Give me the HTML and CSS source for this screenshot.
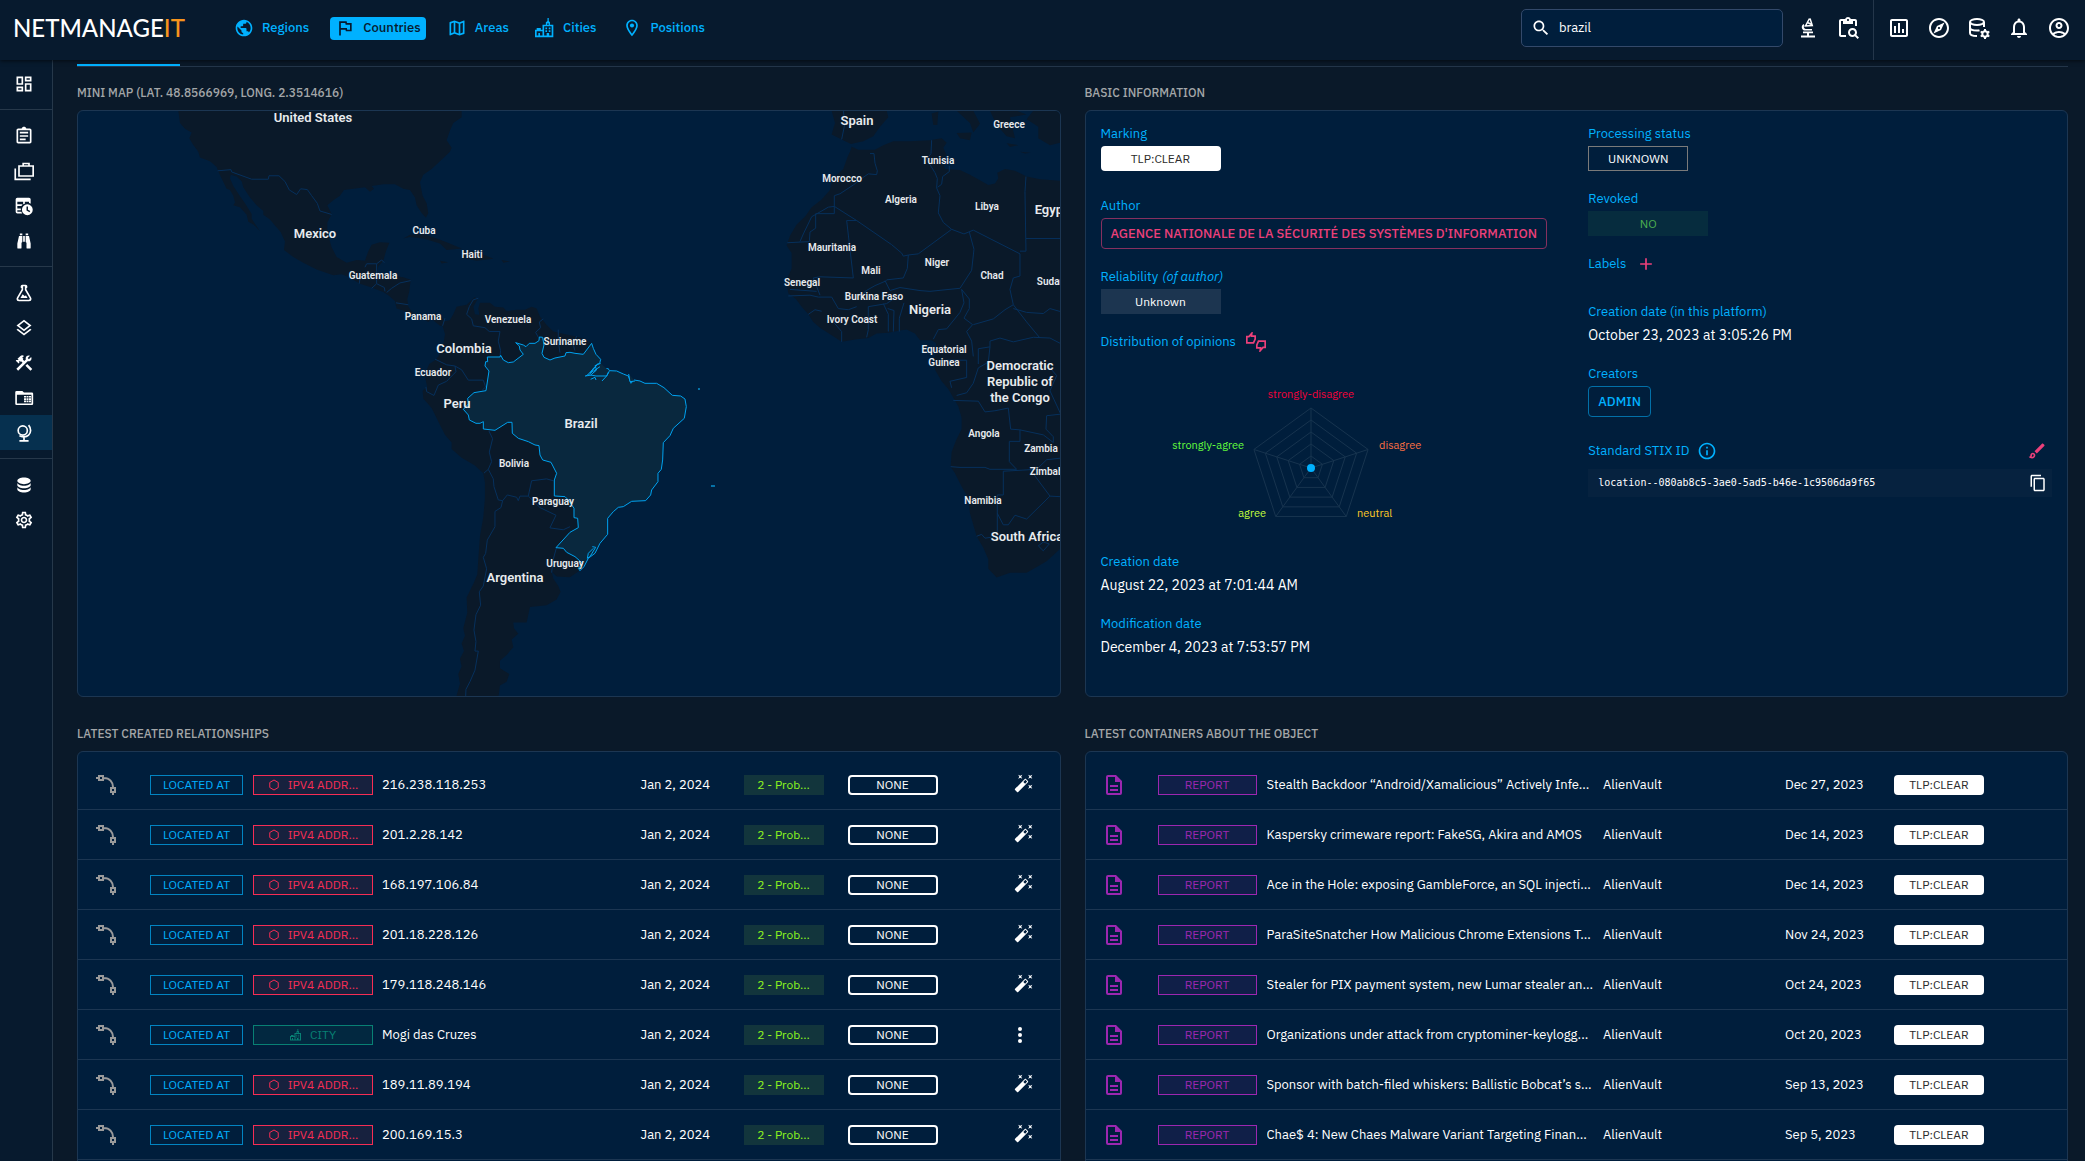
FILE: index.html
```html
<!DOCTYPE html>
<html lang="en">

<head>
    <meta charset="utf-8">
    <title>Brazil - Countries</title>
    <link rel="stylesheet" href="styles.css">
</head>

<body>
    <!-- icon sprite -->
    <svg class="sprite" aria-hidden="true">
        <symbol id="i-globe" viewBox="0 0 24 24"><path d="M12 2C6.48 2 2 6.48 2 12s4.48 10 10 10 10-4.48 10-10S17.52 2 12 2zm-1 17.93c-3.95-.49-7-3.85-7-7.93 0-.62.08-1.21.21-1.79L9 15v1c0 1.1.9 2 2 2v1.93zm6.9-2.54c-.26-.81-1-1.39-1.9-1.39h-1v-3c0-.55-.45-1-1-1H8v-2h2c.55 0 1-.45 1-1V7h2c1.1 0 2-.9 2-2v-.41c2.93 1.19 5 4.06 5 7.41 0 2.08-.8 3.97-2.1 5.39z"/></symbol>
        <symbol id="i-flag" viewBox="0 0 24 24"><path d="m12.36 6 .4 2H18v6h-3.36l-.4-2H7V6h5.36M14 4H5v17h2v-7h5.6l.4 2h7V6h-5.6L14 4z"/></symbol>
        <symbol id="i-map" viewBox="0 0 24 24"><path d="m20.5 3-.16.03L15 5.1 9 3 3.36 4.9c-.21.07-.36.25-.36.48V20.5c0 .28.22.5.5.5l.16-.03L9 18.9l6 2.1 5.64-1.9c.21-.07.36-.25.36-.48V3.5c0-.28-.22-.5-.5-.5zM10 5.47l4 1.4v11.66l-4-1.4V5.47zm-5 .99 3-1.01v11.7l-3 1.16V6.46zm14 11.08-3 1.01V6.86l3-1.16v11.84z"/></symbol>
        <symbol id="i-city" viewBox="0 0 24 24"><path fill-rule="evenodd" d="M15 0h1.500v3.500L18 5v3h4v15H0V14h2v-2h5v2h2V8h4V5l2-1.500zM14.500 6.500V8h2V6.500zM2 16v5h2v-3h2v3h3v-5zM11 10v11h3v-3h3v3h3V10zM12.500 11.500h2v2h-2zM16.500 11.500h2v2h-2zM12.500 14.800h2v2h-2zM16.500 14.800h2v2h-2z"/></symbol>
        <symbol id="i-place" viewBox="0 0 24 24"><path d="M12 2C8.130 2 5 5.130 5 9c0 5.250 7 13 7 13s7-7.750 7-13c0-3.870-3.130-7-7-7zM7 9c0-2.760 2.240-5 5-5s5 2.240 5 5c0 2.880-2.880 7.190-5 9.880C9.920 16.210 7 11.850 7 9z"/><circle cx="12" cy="9" r="2.500"/></symbol>
        <symbol id="i-search" viewBox="0 0 24 24"><path d="M15.500 14h-.79l-.28-.27C15.410 12.590 16 11.110 16 9.500 16 5.910 13.090 3 9.500 3S3 5.910 3 9.500 5.910 16 9.500 16c1.610 0 3.090-.59 4.230-1.570l.27.28v.79l5 4.990L20.490 19l-4.990-5zm-6 0C7.010 14 5 11.990 5 9.500S7.010 5 9.500 5 14 7.010 14 9.500 11.990 14 9.500 14z"/></symbol>
        <symbol id="i-microscope" viewBox="0 0 24 24"><path d="M5 19.500h14v2H5zM7 15.500h10v1.700H13v2.300h-2v-2.300H7zM7.800 14.500C5.200 12.800 5.200 9.500 7.500 8l1 1.500C7.300 10.500 7.600 12 9.500 13H16v1.500z"/><path d="M13.500 2.500 9.500 10l6.800-.5-2.300-7M11.500 6.500l4 2" fill="none" stroke="currentColor" stroke-width="1.500"/></symbol>
        <symbol id="i-paste-search" viewBox="0 0 24 24"><path d="M5 5h2v3h10V5h2v5h2V5c0-1.100-.9-2-2-2h-4.180C14.400 1.840 13.300 1 12 1c-1.300 0-2.400.84-2.820 2H5c-1.100 0-2 .9-2 2v14c0 1.100.9 2 2 2h5v-2H5V5zm7-2c.55 0 1 .45 1 1s-.45 1-1 1-1-.45-1-1 .45-1 1-1z"/><path d="M20.300 18.900c.4-.7.7-1.500.7-2.400 0-2.500-2-4.500-4.500-4.500S12 14 12 16.500s2 4.500 4.500 4.500c.9 0 1.700-.3 2.400-.7l2.700 2.700 1.400-1.400-2.700-2.700zm-3.800.1c-1.400 0-2.500-1.100-2.500-2.500s1.100-2.500 2.500-2.500 2.500 1.100 2.500 2.500-1.100 2.500-2.500 2.500z"/></symbol>
        <symbol id="i-chart" viewBox="0 0 24 24"><path d="M9 17H7v-7h2v7zm4 0h-2V7h2v10zm4 0h-2v-4h2v4zm2 2H5V5h14v14zm0-16H5c-1.100 0-2 .9-2 2v14c0 1.100.9 2 2 2h14c1.100 0 2-.9 2-2V5c0-1.100-.9-2-2-2z"/></symbol>
        <symbol id="i-explore" viewBox="0 0 24 24"><path d="M12 2C6.480 2 2 6.480 2 12s4.480 10 10 10 10-4.480 10-10S17.520 2 12 2zm0 18c-4.410 0-8-3.590-8-8s3.590-8 8-8 8 3.590 8 8-3.590 8-8 8zm-5.500-2.500 7.510-3.490L17.500 6.500 9.990 9.990 6.500 17.500zm5.500-6.600c.61 0 1.100.49 1.100 1.100s-.49 1.100-1.100 1.100-1.100-.49-1.100-1.100.49-1.100 1.100-1.100z"/></symbol>
        <symbol id="i-db-gear" viewBox="0 0 24 24"><g fill="none" stroke="currentColor" stroke-width="2"><ellipse cx="10" cy="6" rx="7" ry="3"/><path d="M3 6v11c0 1.700 3 3 7 3M17 6v5M3 11.500c0 1.700 3 3 7 3 1 0 2-.1 2.500-.3"/><circle cx="18" cy="18" r="2.700"/><path d="M18 13v2M18 21v2M13.700 15.500l1.600 1M20.700 19.500l1.600 1M13.700 20.500l1.600-1M20.700 16.500l1.600-1"/></g></symbol>
        <symbol id="i-bell" viewBox="0 0 24 24"><path d="M12 22c1.100 0 2-.9 2-2h-4c0 1.100.9 2 2 2zm6-6v-5c0-3.070-1.630-5.640-4.500-6.320V4c0-.83-.67-1.500-1.500-1.500s-1.500.67-1.500 1.500v.68C7.640 5.360 6 7.920 6 11v5l-2 2v1h16v-1l-2-2zm-2 1H8v-6c0-2.480 1.510-4.500 4-4.500s4 2.020 4 4.500v6z"/></symbol>
        <symbol id="i-account" viewBox="0 0 24 24"><path d="M12 2C6.480 2 2 6.480 2 12s4.480 10 10 10 10-4.480 10-10S17.520 2 12 2zM7.350 18.500C8.660 17.560 10.260 17 12 17s3.340.56 4.650 1.500C15.340 19.440 13.740 20 12 20s-3.340-.56-4.650-1.500zm10.790-1.380C16.450 15.800 14.320 15 12 15s-4.450.8-6.140 2.120C4.700 15.730 4 13.950 4 12c0-4.420 3.580-8 8-8s8 3.580 8 8c0 1.950-.7 3.730-1.860 5.120zM12 6c-1.930 0-3.500 1.570-3.500 3.500S10.070 13 12 13s3.500-1.570 3.500-3.500S13.930 6 12 6zm0 5c-.83 0-1.500-.67-1.500-1.500S11.170 8 12 8s1.500.67 1.500 1.500S12.830 11 12 11z"/></symbol>
        <symbol id="i-dashboard" viewBox="0 0 24 24"><path d="M19 5v2h-4V5h4M9 5v6H5V5h4m10 8v6h-4v-6h4M9 17v2H5v-2h4M21 3h-8v6h8V3zM11 3H3v10h8V3zm10 8h-8v10h8V11zm-10 4H3v6h8v-6z"/></symbol>
        <symbol id="i-assignment" viewBox="0 0 24 24"><path fill-rule="evenodd" d="M7 15h7v2H7zM7 11h10v2H7zM7 7h10v2H7zM19 3h-4.180C14.400 1.840 13.300 1 12 1s-2.400.84-2.820 2H5c-1.100 0-2 .9-2 2v14c0 1.100.9 2 2 2h14c1.100 0 2-.9 2-2V5c0-1.100-.9-2-2-2zM5 5h14v14H5z"/></symbol>
        <symbol id="i-cases" viewBox="0 0 24 24"><path fill="none" stroke="currentColor" stroke-width="2" d="M6 6h17v12H6zM11 6V3h7v3M1.500 9v13H20"/></symbol>
        <symbol id="i-table-clock" viewBox="0 0 24 24"><path fill-rule="evenodd" d="M4 2h14a2 2 0 0 1 2 2v5.300a8 8 0 0 0-2-.8V7h-5v2.200A8 8 0 0 0 11 10V7H4v3h6.500A8 8 0 0 0 9 12H4v3h4.200v2H4v2h4.800l1 2H4a2 2 0 0 1-2-2V4a2 2 0 0 1 2-2z"/><path fill-rule="evenodd" d="M16 10a6.500 6.500 0 1 1 0 13 6.500 6.500 0 0 1 0-13zM15 12.500v4.800l3.600 2.100.9-1.400-2.700-1.600v-3.900z"/></symbol>
        <symbol id="i-binoculars" viewBox="0 0 24 24"><path d="M11,6H13V13H11V6M9,20A1,1 0 0,1 8,21H5A1,1 0 0,1 4,20V15L6,6H10V13A1,1 0 0,1 9,14V20M10,5H7V3H10V5M15,20V14A1,1 0 0,1 14,13V6H18L20,15V20A1,1 0 0,1 19,21H16A1,1 0 0,1 15,20M14,5V3H17V5H14Z"/></symbol>
        <symbol id="i-flask" viewBox="0 0 24 24"><path d="M5,19A1,1 0 0,0 6,20H18A1,1 0 0,0 19,19C19,18.790 18.930,18.590 18.820,18.430L13,8.350V4H11V8.350L5.180,18.430C5.070,18.590 5,18.790 5,19M6,22A3,3 0 0,1 3,19C3,18.400 3.180,17.840 3.500,17.370L9,7.810V6A1,1 0 0,1 8,5V4A2,2 0 0,1 10,2H14A2,2 0 0,1 16,4V5A1,1 0 0,1 15,6V7.810L20.500,17.370C20.820,17.840 21,18.400 21,19A3,3 0 0,1 18,22H6M13,16L14.340,14.660L16.270,18H7.730L10.390,13.390L13,16Z"/></symbol>
        <symbol id="i-layers" viewBox="0 0 24 24"><path d="m11.990 18.540-7.370-5.730L3 14.070l9 7 9-7-1.630-1.270-7.380 5.740zM12 16l7.360-5.730L21 9l-9-7-9 7 1.630 1.270L12 16zm0-11.470L17.740 9 12 13.470 6.260 9 12 4.530z"/></symbol>
        <symbol id="i-tools" viewBox="0 0 24 24"><path d="m13.780 15.170 2.120-2.120 6 6-2.120 2.120zM17.500 10c1.930 0 3.500-1.570 3.500-3.500 0-.58-.16-1.120-.41-1.600l-2.700 2.700-1.490-1.490 2.700-2.700c-.48-.25-1.020-.41-1.600-.41C15.570 3 14 4.570 14 6.500c0 .41.08.8.21 1.160l-1.850 1.850-1.780-1.780.71-.71-1.410-1.410L12 3.490c-1.170-1.170-3.070-1.170-4.240 0L4.220 7.030l1.410 1.410H2.810l-.71.71 3.540 3.540.71-.71V9.150l1.410 1.410.71-.71 1.780 1.780-7.410 7.410 2.120 2.120L16.340 9.790c.36.13.75.21 1.160.21z"/></symbol>
        <symbol id="i-folder-table" viewBox="0 0 24 24"><path fill-rule="evenodd" d="M3 3.500h7l2 2h9.500a1.500 1.500 0 0 1 1.500 1.500v12a1.500 1.500 0 0 1-1.500 1.500H3A1.500 1.500 0 0 1 1.500 19V5A1.500 1.500 0 0 1 3 3.500zM3.500 8v10.500h17.500V8z"/><path d="M12 9.500h2.400v2H12zM15 9.500h2.400v2H15zM18 9.500h2.400v2H18zM12 12.300h2.400v2H12zM15 12.300h2.400v2H15zM18 12.300h2.400v2H18zM12 15h2.400v2H12zM15 15h2.400v2H15zM18 15h2.400v2H18z"/></symbol>
        <symbol id="i-globe-stand" viewBox="0 0 24 24"><g fill="none" stroke="currentColor" stroke-width="2"><circle cx="10.500" cy="9" r="5.500"/><path d="M17.500 2.500c3.500 4 3 9.500 0 12-3 2.700-8 2.800-11 .7M12 17v4M6.500 21.500h11"/></g></symbol>
        <symbol id="i-database" viewBox="0 0 24 24"><path d="M12,3C7.580,3 4,4.790 4,7C4,9.210 7.580,11 12,11C16.420,11 20,9.210 20,7C20,4.790 16.420,3 12,3M4,9V12C4,14.210 7.580,16 12,16C16.420,16 20,14.210 20,12V9C20,11.210 16.420,13 12,13C7.580,13 4,11.210 4,9M4,14V17C4,19.210 7.580,21 12,21C16.420,21 20,19.210 20,17V14C20,16.210 16.420,18 12,18C7.580,18 4,16.210 4,14Z"/></symbol>
        <symbol id="i-settings" viewBox="0 0 24 24"><path d="M19.430 12.980c.04-.32.07-.64.07-.98 0-.34-.03-.66-.07-.98l2.110-1.650c.19-.15.24-.42.12-.64l-2-3.460c-.09-.16-.26-.25-.44-.25-.06 0-.12.01-.17.03l-2.490 1c-.52-.4-1.080-.73-1.690-.98l-.38-2.650C14.460 2.180 14.250 2 14 2h-4c-.25 0-.46.18-.49.42l-.38 2.650c-.61.25-1.170.59-1.690.98l-2.490-1c-.06-.02-.12-.03-.18-.03-.17 0-.34.09-.43.25l-2 3.460c-.13.22-.07.49.12.64l2.110 1.650c-.04.32-.07.65-.07.98 0 .33.03.66.07.98l-2.110 1.650c-.19.15-.24.42-.12.64l2 3.460c.09.16.26.25.44.25.06 0 .12-.01.17-.03l2.490-1c.52.4 1.080.73 1.690.98l.38 2.650c.03.24.24.42.49.42h4c.25 0 .46-.18.49-.42l.38-2.650c.61-.25 1.170-.59 1.690-.98l2.490 1c.06.02.12.03.18.03.17 0 .34-.09.43-.25l2-3.460c.12-.22.07-.49-.12-.64l-2.110-1.650zm-1.980-1.710c.04.31.05.52.05.73 0 .21-.02.43-.05.73l-.14 1.130.89.7 1.080.84-.7 1.210-1.270-.51-1.040-.42-.9.68c-.43.32-.84.56-1.250.73l-1.060.43-.16 1.130-.2 1.350h-1.400l-.19-1.350-.16-1.130-1.060-.43c-.43-.18-.83-.41-1.230-.71l-.91-.7-1.060.43-1.270.51-.7-1.210 1.080-.84.89-.7-.14-1.130c-.03-.31-.05-.54-.05-.74s.02-.43.05-.73l.14-1.130-.89-.7-1.080-.84.7-1.210 1.270.51 1.040.42.9-.68c.43-.32.84-.56 1.250-.73l1.060-.43.16-1.130.2-1.350h1.390l.19 1.350.16 1.130 1.060.43c.43.18.83.41 1.230.71l.91.7 1.060-.43 1.270-.51.7 1.210-1.070.85-.89.7.14 1.130zM12 8c-2.210 0-4 1.790-4 4s1.790 4 4 4 4-1.790 4-4-1.790-4-4-4zm0 6c-1.100 0-2-.9-2-2s.9-2 2-2 2 .9 2 2-.9 2-2 2z"/></symbol>
        <symbol id="i-thumbs" viewBox="0 0 24 24"><g fill="none" stroke="currentColor" stroke-width="2"><path d="M1 5.500h2.500L7 1.500 6.500 5H11v3.500L9 13H1z"/><path d="M23 18.500h-2.500L17 22.500l.5-3.500H13v-3.500l2-4.500h8z"/></g></symbol>
        <symbol id="i-add" viewBox="0 0 24 24"><path d="M19 13h-6v6h-2v-6H5v-2h6V5h2v6h6v2z"/></symbol>
        <symbol id="i-info" viewBox="0 0 24 24"><path d="M11 7h2v2h-2zm0 4h2v6h-2zm1-9C6.480 2 2 6.480 2 12s4.480 10 10 10 10-4.480 10-10S17.520 2 12 2zm0 18c-4.410 0-8-3.590-8-8s3.590-8 8-8 8 3.590 8 8-3.590 8-8 8z"/></symbol>
        <symbol id="i-brush" viewBox="0 0 24 24"><path d="M7 16c.55 0 1 .45 1 1 0 1.100-.9 2-2 2-.17 0-.33-.02-.5-.05.31-.55.5-1.210.5-1.950 0-.55.45-1 1-1M18.670 3c-.26 0-.51.1-.71.29L9 12.250 11.750 15l8.960-8.960c.39-.39.39-1.020 0-1.410l-1.340-1.340c-.2-.2-.45-.29-.7-.29zM7 14c-1.660 0-3 1.340-3 3 0 1.310-1.160 2-2 2 .92 1.220 2.490 2 4 2 2.210 0 4-1.790 4-4 0-1.660-1.340-3-3-3z"/></symbol>
        <symbol id="i-copy" viewBox="0 0 24 24"><path d="M16 1H4c-1.100 0-2 .9-2 2v14h2V3h12V1zm3 4H8c-1.100 0-2 .9-2 2v14c0 1.100.9 2 2 2h11c1.100 0 2-.9 2-2V7c0-1.100-.9-2-2-2zm0 16H8V7h11v14z"/></symbol>
        <symbol id="i-relation" viewBox="0 0 24 24"><g fill="none" stroke="currentColor" stroke-width="2"><path d="M5 3h4v4H5zM17 15h4v4h-4zM2 5h2M19 20v2M10 5c5.500 0 9 4 9 9"/></g></symbol>
        <symbol id="i-wand" viewBox="0 0 24 24"><path d="M7.500,5.600L5,7L6.400,4.500L5,2L7.500,3.400L10,2L8.600,4.500L10,7L7.500,5.600M19.500,15.400L22,14L20.600,16.500L22,19L19.500,17.600L17,19L18.400,16.500L17,14L19.500,15.400M22,2L20.600,4.500L22,7L19.500,5.600L17,7L18.400,4.500L17,2L19.500,3.400L22,2M13.340,12.780L15.780,10.340L13.660,8.220L11.220,10.660L13.340,12.780M14.370,7.290L16.710,9.630C17.100,10 17.100,10.650 16.710,11.040L5.040,22.710C4.650,23.100 4,23.100 3.630,22.710L1.290,20.370C.9,20 .9,19.350 1.290,18.960L12.960,7.290C13.350,6.900 14,6.900 14.370,7.290Z"/></symbol>
        <symbol id="i-more" viewBox="4 0 16 24"><circle cx="12" cy="6" r="2"/><circle cx="12" cy="12" r="2"/><circle cx="12" cy="18" r="2"/></symbol>
        <symbol id="i-file" viewBox="0 0 24 24"><path d="M6,2A2,2 0 0,0 4,4V20A2,2 0 0,0 6,22H18A2,2 0 0,0 20,20V8L14,2H6M6,4H13V9H18V20H6V4M8,12V14H16V12H8M8,16V18H16V16H8Z"/></symbol>
        <symbol id="i-hexagon" viewBox="0 0 24 24"><path fill="none" stroke="currentColor" stroke-width="2" d="M12 2l8.500 5v10L12 22l-8.500-5V7z"/></symbol>
    </svg>

    <header class="topbar">
        <div class="logo">NETMANAGE<span>IT</span></div>
        <nav class="tabs">
            <a href="#"><svg><use href="#i-globe"/></svg>Regions</a>
            <a href="#" class="active"><svg><use href="#i-flag"/></svg>Countries</a>
            <a href="#"><svg><use href="#i-map"/></svg>Areas</a>
            <a href="#"><svg><use href="#i-city"/></svg>Cities</a>
            <a href="#"><svg><use href="#i-place"/></svg>Positions</a>
        </nav>
        <div class="search">
            <svg><use href="#i-search"/></svg>
            <input type="text" id="search" value="brazil" aria-label="Search">
        </div>
        <div class="tools">
            <button type="button" aria-label="Advanced search"><svg><use href="#i-microscope"/></svg></button>
            <button type="button" aria-label="Bulk search"><svg><use href="#i-paste-search"/></svg></button>
        </div>
        <div class="tools tools-right">
            <button type="button" aria-label="Dashboards"><svg><use href="#i-chart"/></svg></button>
            <button type="button" aria-label="Investigations"><svg><use href="#i-explore"/></svg></button>
            <button type="button" aria-label="Data"><svg><use href="#i-db-gear"/></svg></button>
            <button type="button" aria-label="Notifications"><svg><use href="#i-bell"/></svg></button>
            <button type="button" aria-label="Profile"><svg><use href="#i-account"/></svg></button>
        </div>
    </header>

    <div class="layout">
        <nav class="sidebar">
            <div class="menu">
                <a href="#" aria-label="Dashboard"><svg><use href="#i-dashboard"/></svg></a>
            </div>
            <div class="menu">
                <a href="#" aria-label="Analyses"><svg><use href="#i-assignment"/></svg></a>
                <a href="#" aria-label="Cases"><svg><use href="#i-cases"/></svg></a>
                <a href="#" aria-label="Events"><svg><use href="#i-table-clock"/></svg></a>
                <a href="#" aria-label="Observations"><svg><use href="#i-binoculars"/></svg></a>
            </div>
            <div class="menu">
                <a href="#" aria-label="Threats"><svg><use href="#i-flask"/></svg></a>
                <a href="#" aria-label="Arsenal"><svg><use href="#i-layers"/></svg></a>
                <a href="#" aria-label="Techniques"><svg><use href="#i-tools"/></svg></a>
                <a href="#" aria-label="Entities"><svg><use href="#i-folder-table"/></svg></a>
                <a href="#" class="active" aria-label="Locations"><svg><use href="#i-globe-stand"/></svg></a>
            </div>
            <div class="menu">
                <a href="#" aria-label="Data"><svg><use href="#i-database"/></svg></a>
                <a href="#" aria-label="Settings"><svg><use href="#i-settings"/></svg></a>
            </div>
        </nav>

        <main class="content">
            <div class="tab-line"><span></span></div>

            <div class="grid">
                <section>
                    <h2>Mini map (Lat. 48.8566969, Long. 2.3514616)</h2>
                    <div class="card card-top">
                        <svg class="map" viewBox="0 0 983 585" preserveAspectRatio="xMinYMin slice">
                            <!-- Americas -->
                            <g transform="translate(-8 -11) scale(.3333 .3827)">
                                <path class="land" d="M325,28 330,60 345,75 365,85 358,100 368,115 385,135 390,150 420,160 440,175 445,187 455,205 470,232 480,235 490,250 495,268 490,275 510,280 530,300 535,318 550,325 570,343 560,330 545,310 545,298 525,270 505,245 490,225 480,205 482,195 500,200 515,212 520,228 540,255 560,275 580,290 580,300 600,312 615,328 632,345 645,370 642,392 670,410 700,425 740,443 790,458 815,455 835,462 870,480 905,490 940,502 955,510 975,525 980,545 1000,550 1020,560 1040,575 1060,572 1075,580 1085,572 1110,590 1118,590 1125,612 1120,640 1105,670 1095,680 1078,690 1065,715 1068,735 1072,750 1058,760 1060,780 1085,805 1105,840 1125,875 1145,895 1145,912 1175,935 1215,955 1240,975 1245,1000 1245,1040 1240,1090 1230,1140 1225,1200 1222,1240 1210,1265 1190,1300 1192,1340 1180,1380 1185,1400 1175,1420 1182,1440 1170,1460 1175,1480 1165,1500 1170,1525 1158,1562 1285,1562 1290,1530 1310,1520 1318,1500 1290,1485 1290,1465 1310,1450 1330,1430 1325,1410 1345,1395 1332,1380 1330,1365 1370,1365 1375,1345 1380,1325 1430,1320 1460,1305 1472,1285 1465,1270 1450,1250 1445,1232 1460,1245 1500,1247 1525,1232 1560,1150 1700,900 1600,700 1565,636 1540,623 1515,617 1480,611 1450,605 1430,588 1410,566 1400,545 1385,540 1365,548 1340,548 1310,552 1300,542 1275,540 1260,530 1230,530 1225,545 1228,562 1215,560 1210,540 1222,522 1215,515 1190,535 1160,540 1150,560 1140,575 1125,578 1118,570 1095,558 1075,562 1060,567 1040,568 1025,552 1015,540 1012,520 1018,500 1022,470 1000,463 975,460 940,455 920,455 925,435 940,420 948,395 958,373 930,372 905,378 895,395 885,420 860,418 830,425 800,410 785,385 772,345 772,320 785,298 772,275 790,262 810,250 822,235 850,232 885,228 900,240 912,232 905,225 940,220 975,220 1000,232 1020,235 1035,255 1040,275 1055,295 1068,308 1075,295 1070,270 1058,250 1050,215 1060,195 1085,180 1110,160 1140,135 1145,125 1130,105 1140,80 1150,60 1175,45 1175,28Z"/>
                                <path class="land" d="M1000,362 1020,352 1060,350 1100,362 1130,372 1175,388 1130,392 1110,375 1060,362 1020,358ZM1175,395 1215,395 1270,415 1220,420 1175,412ZM1295,418 1320,422 1300,425ZM1110,420 1135,424 1115,427Z"/>
                                <path class="border" d="M443,185 483,182 485,188 545,207 595,207 597,198 627,198 645,213 658,235 680,247 692,232 712,234 725,250 742,270 750,290 785,299M885,437 890,428 920,428 920,480 905,492M920,428 935,418 943,425M868,480 870,465M920,480 943,490 945,500M950,503 965,492 990,478 1022,472M978,530 1015,535M1118,590 1125,570"/>
                                <path class="border" d="M1225,518 1210,522 1198,540 1190,560 1205,572 1210,590 1245,595 1258,605 1290,605 1285,630 1292,655 1290,670M1095,677 1130,692 1155,695 1175,705 1195,732 1240,732 1247,750 1237,758M1155,695 1158,710 1130,735 1105,745 1092,772 1070,762 1068,750M1257,865 1268,885 1258,920 1265,945 1255,965 1242,975M1255,965 1270,990 1272,1010 1285,1045 1298,1047 1312,1032 1340,1038 1345,1047 1350,1035 1375,1035 1385,995 1430,990 1450,995M1375,1035 1410,1065 1458,1085 1440,1118 1480,1123 1500,1115M1298,1047 1293,1065 1275,1075 1275,1115 1252,1150 1247,1185 1240,1195 1250,1225 1240,1270 1228,1285 1232,1320 1218,1345 1212,1385 1218,1415 1215,1440 1225,1440 1215,1490 1200,1520 1188,1540 1187,1562M1460,1168 1450,1200 1445,1235M1420,572 1408,580 1412,595 1397,607 1405,620M1465,600 1465,630 1470,660M1520,617 1510,640 1515,655"/>
                            </g>
                            <!-- Africa and southern Europe -->
                            <g transform="translate(682 -11) scale(.3333 .3827)">
                                <path class="land" d="M270,135 275,122 295,130 345,130 370,118 400,108 450,108 510,105 545,100 560,112 550,125 560,145 545,155 555,180 600,183 630,195 665,212 685,222 705,218 715,205 712,190 735,180 765,185 800,200 840,207 910,212 910,1165 860,1205 830,1220 800,1235 750,1235 710,1248 685,1225 685,1200 670,1170 650,1140 640,1110 630,1080 625,1040 605,1010 585,975 572,958 575,920 588,890 605,860 605,830 595,800 585,785 565,755 545,735 525,705 520,680 530,655 528,635 515,628 480,628 465,610 440,600 415,603 385,608 350,610 325,622 290,625 245,632 215,615 180,595 160,580 145,560 125,540 108,520 85,505 80,480 85,460 95,440 95,400 80,380 90,355 110,325 135,305 155,280 185,260 210,235 215,215 225,200 250,180 262,150Z"/>
                                <path class="land" d="M215,28 225,60 215,90 245,103 273,115 310,108 340,95 360,70 385,45 380,28ZM515,35 535,30 532,65 520,65ZM590,86 635,85 630,105 600,100ZM590,28 640,28 660,62 640,85 630,60ZM690,28 770,28 800,38 750,45 765,100 740,95 710,65ZM740,113 775,118 750,123ZM820,28 910,28 910,110 870,118 835,100 835,70 800,50ZM780,135 812,138 795,140Z"/>
                                <path class="border" d="M330,140 342,140 345,165 352,185 350,195 325,193 305,205 280,222 240,245 223,250 223,297 167,297 167,335 150,345 148,370 82,373M120,370 130,350 155,305 205,280 223,278 290,315 395,378 425,400 430,408 445,405 475,402 575,338M290,315 260,315 280,465 180,462 160,465M515,105 513,140 500,155 525,190 532,205 530,230 540,250 535,295 550,320 575,338 612,350 640,340 780,402 780,460 760,465 750,495 760,535 735,548 700,572 640,587M568,172 568,187 548,200 545,220 533,228M798,200 795,240 798,395 780,395M798,362 910,362M445,405 442,440 430,465 380,470M375,472 390,498 420,490 480,498 510,500 600,492 635,445 642,390 628,345"/>
                                <path class="border" d="M300,520 315,500 345,485 380,472M325,540 380,532 400,520 M325,540 325,600 320,620M370,532 385,560 385,605M383,545 402,550 400,605M432,530 418,570 418,605M245,632 245,605 220,580M235,545 215,515 175,515 150,510 85,512M235,545 265,548 290,540M90,495 170,500M160,465 180,510M145,560 165,548 185,552M520,625 535,600 560,598 600,555 612,530 605,495 628,520 628,545 612,570 638,587 620,605 635,630 640,670M655,690 655,650 690,645 690,630 720,622 760,632 820,620 870,622 910,640M760,535 800,580 840,622M760,545 800,555 850,558 870,545 910,555M690,645 685,685 655,700 640,740 620,765 590,772M560,680 620,680 620,725 570,735 575,752M870,700 890,720 870,760 902,820"/>
                                <path class="border" d="M580,785 655,787 675,815 705,812 745,805 752,860 780,862 780,892 748,892 748,945 770,965 690,965 675,960 600,960 572,958M780,862 850,875 880,895 880,880 858,860 860,825 910,820M730,970 830,965 860,940 910,935M730,970 730,1032 712,1032 712,1140 675,1145 665,1135 650,1140M712,1080 730,1110 745,1110 765,1085 800,1095 870,1035 910,1037M810,965 870,1035M835,1165 850,1155 868,1160 850,1178ZM250,28 255,60 245,103"/>
                            </g>
                            <!-- Brazil -->
                            <g transform="translate(362 189) scale(.3333)">
                                <path class="country" d="M70,328 L85,312 83,295 102,278 138,272 147,213 135,198 137,185 143,185 142,171 180,171 182,166 190,180 205,188 220,186 250,163 240,150 238,138 227,128 250,135 258,140 268,130 285,130 297,122 298,111 308,112 312,135 306,160 312,172 330,180 345,174 375,168 378,158 390,157 405,160 430,163 455,130 460,145 468,163 482,178 478,195 460,205 450,222 436,228 455,225 470,208 505,206 508,212 530,213 550,222 565,228 573,250 582,240 600,243 615,250 650,250 672,263 697,286 722,288 735,297 739,320 733,355 700,385 690,407 670,428 668,480 664,508 654,520 654,545 635,570 632,585 617,602 575,604 550,620 535,622 520,635 503,655 503,703 480,730 465,760 445,775 432,800 420,812 415,805 428,790 405,770 380,757 370,745 348,743 390,697 415,683 413,655 402,653 402,625 385,600 375,590 343,588 343,540 350,520 333,487 308,480 300,465 297,437 285,435 265,425 235,415 217,400 216,367 203,367 165,391 130,387 130,365 120,370 108,370 88,360 85,345Z"/>
                                <path class="country" d="M482,190 465,197 470,210 452,225 468,228 500,228 508,214M440,228 475,190 450,220 480,200M486,243 500,228 506,215M452,238 465,232 468,240M457,740 467,742 450,770 442,775 445,760 460,745M566,222 570,245 585,243"/>
                                <path class="islet" d="M774,264h6v6h-6zM813,555h12v6h-12z"/>
                            </g>
                            <g class="names names-lg">
                                <text x="235" y="11">United States</text>
                                <text x="237" y="127">Mexico</text>
                                <text x="386" y="242">Colombia</text>
                                <text x="379" y="297">Peru</text>
                                <text x="503" y="317">Brazil</text>
                                <text x="437" y="471">Argentina</text>
                                <text x="779" y="14">Spain</text>
                                <text x="973" y="103">Egypt</text>
                                <text x="852" y="203">Nigeria</text>
                                <text x="942" y="259">Democratic</text>
                                <text x="942" y="275">Republic of</text>
                                <text x="942" y="291">the Congo</text>
                                <text x="949" y="430">South Africa</text>
                            </g>
                            <g class="names">
                                <text x="346" y="123">Cuba</text>
                                <text x="394" y="147">Haiti</text>
                                <text x="295" y="168">Guatemala</text>
                                <text x="345" y="209">Panama</text>
                                <text x="430" y="212">Venezuela</text>
                                <text x="487" y="234">Suriname</text>
                                <text x="355" y="265">Ecuador</text>
                                <text x="436" y="356">Bolivia</text>
                                <text x="475" y="394">Paraguay</text>
                                <text x="487" y="456">Uruguay</text>
                                <text x="931" y="17">Greece</text>
                                <text x="860" y="53">Tunisia</text>
                                <text x="764" y="71">Morocco</text>
                                <text x="823" y="92">Algeria</text>
                                <text x="909" y="99">Libya</text>
                                <text x="754" y="140">Mauritania</text>
                                <text x="793" y="163">Mali</text>
                                <text x="859" y="155">Niger</text>
                                <text x="914" y="168">Chad</text>
                                <text x="973" y="174">Sudan</text>
                                <text x="724" y="175">Senegal</text>
                                <text x="796" y="189">Burkina Faso</text>
                                <text x="774" y="212">Ivory Coast</text>
                                <text x="866" y="242">Equatorial</text>
                                <text x="866" y="255">Guinea</text>
                                <text x="906" y="326">Angola</text>
                                <text x="963" y="341">Zambia</text>
                                <text x="975" y="364">Zimbabwe</text>
                                <text x="905" y="393">Namibia</text>
                            </g>
                        </svg>
                    </div>
                </section>

                <section>
                    <h2>Basic information</h2>
                    <div class="card card-top info">
                        <div>
                            <div class="field field-marking">
                                <h3>Marking</h3>
                                <span class="chip chip-clear">TLP:CLEAR</span>
                            </div>
                            <div class="field">
                                <h3>Author</h3>
                                <button type="button" class="btn btn-author">Agence nationale de la sécurité des systèmes d'information</button>
                            </div>
                            <div class="field">
                                <h3>Reliability <em>(of author)</em></h3>
                                <span class="chip chip-grey">Unknown</span>
                            </div>
                            <div class="field">
                                <h3>Distribution of opinions <button type="button" class="icon-btn" aria-label="Give opinion"><svg><use href="#i-thumbs"/></svg></button></h3>
                                <svg class="radar" viewBox="0 0 420 180">
                                    <g id="radarGrid"></g>
                                    <circle cx="210" cy="114" r="4" fill="#00b1ff"/>
                                    <text x="210" y="44" text-anchor="middle" fill="#f8003a">strongly-disagree</text>
                                    <text x="278" y="95" fill="#ff7043">disagree</text>
                                    <text x="256" y="163" fill="#ffca28">neutral</text>
                                    <text x="165" y="163" text-anchor="end" fill="#c6ff3c">agree</text>
                                    <text x="143" y="95" text-anchor="end" fill="#64ff3c">strongly-agree</text>
                                </svg>
                            </div>
                            <div class="field">
                                <h3>Creation date</h3>
                                <p>August 22, 2023 at 7:01:44 AM</p>
                            </div>
                            <div class="field">
                                <h3>Modification date</h3>
                                <p>December 4, 2023 at 7:53:57 PM</p>
                            </div>
                        </div>
                        <div>
                            <div class="field">
                                <h3>Processing status</h3>
                                <span class="chip chip-status">UNKNOWN</span>
                            </div>
                            <div class="field">
                                <h3>Revoked</h3>
                                <span class="chip chip-no">NO</span>
                            </div>
                            <div class="field field-labels">
                                <h3>Labels <button type="button" class="icon-btn" aria-label="Add label"><svg><use href="#i-add"/></svg></button></h3>
                            </div>
                            <div class="field">
                                <h3>Creation date (in this platform)</h3>
                                <p>October 23, 2023 at 3:05:26 PM</p>
                            </div>
                            <div class="field field-creators">
                                <h3>Creators</h3>
                                <button type="button" class="btn btn-admin">Admin</button>
                            </div>
                            <div class="field field-stix">
                                <h3>Standard STIX ID <svg><use href="#i-info"/></svg>
                                    <button type="button" class="icon-btn" aria-label="Edit STIX ID"><svg><use href="#i-brush"/></svg></button></h3>
                                <div class="code">
                                    <code>location--080ab8c5-3ae0-5ad5-b46e-1c9506da9f65</code>
                                    <button type="button" class="icon-btn" aria-label="Copy"><svg><use href="#i-copy"/></svg></button>
                                </div>
                            </div>
                        </div>
                    </div>
                </section>

                <section>
                    <h2>Latest created relationships</h2>
                    <ul id="relationships" class="card list"></ul>
                </section>

                <section>
                    <h2>Latest containers about the object</h2>
                    <ul id="containers" class="card list"></ul>
                </section>
            </div>
        </main>
    </div>

    <script>
        const relationships = [
            '216.238.118.253', '201.2.28.142', '168.197.106.84', '201.18.228.126',
            '179.118.248.146', 'Mogi das Cruzes', '189.11.89.194', '200.169.15.3'
        ];

        const containers = [
            ['Stealth Backdoor “Android/Xamalicious” Actively Infe...', 'Dec 27, 2023'],
            ['Kaspersky crimeware report: FakeSG, Akira and AMOS', 'Dec 14, 2023'],
            ['Ace in the Hole: exposing GambleForce, an SQL injecti...', 'Dec 14, 2023'],
            ['ParaSiteSnatcher How Malicious Chrome Extensions T...', 'Nov 24, 2023'],
            ['Stealer for PIX payment system, new Lumar stealer an...', 'Oct 24, 2023'],
            ['Organizations under attack from cryptominer-keylogg...', 'Oct 20, 2023'],
            ['Sponsor with batch-filed whiskers: Ballistic Bobcat’s s...', 'Sep 13, 2023'],
            ['Chae$ 4: New Chaes Malware Variant Targeting Finan...', 'Sep 5, 2023']
        ];

        document.getElementById('relationships').innerHTML = relationships.map(name => {
            const city = name === 'Mogi das Cruzes';
            return `
                <li class="row row-relation">
                    <svg class="row-icon"><use href="#i-relation"/></svg>
                    <span class="tag tag-located">LOCATED AT</span>
                    <span class="tag ${city ? 'tag-city' : 'tag-ip'}"><svg><use href="#${city ? 'i-city' : 'i-hexagon'}"/></svg>${city ? 'CITY' : 'IPV4 ADDR...'}</span>
                    <a href="#">${name}</a>
                    <span>Jan 2, 2024</span>
                    <span class="tag tag-level">2 - Prob...</span>
                    <span class="tag tag-none">NONE</span>
                    <button type="button" class="icon-btn ${city ? 'more' : 'wand'}" aria-label="Actions"><svg><use href="#${city ? 'i-more' : 'i-wand'}"/></svg></button>
                </li>`;
        }).join('');

        document.getElementById('containers').innerHTML = containers.map(([title, date]) => `
            <li class="row row-container">
                <svg class="row-icon"><use href="#i-file"/></svg>
                <span class="tag tag-report">REPORT</span>
                <a href="#">${title}</a>
                <span>AlienVault</span>
                <span>${date}</span>
                <span class="tag tag-clear">TLP:CLEAR</span>
            </li>`).join('');

        // pentagon rings and spokes
        const point = (r, i) => {
            const a = (i * 72 - 90) * Math.PI / 180;
            return `${210 + r * Math.cos(a)},${114 + r * Math.sin(a)}`;
        };
        let grid = '';
        for (let r = 12; r <= 60; r += 12) {
            grid += `<polygon points="${[0, 1, 2, 3, 4].map(i => point(r, i)).join(' ')}"/>`;
        }
        for (let i = 0; i < 5; i++) {
            grid += `<polyline points="210,114 ${point(60, i)}"/>`;
        }
        document.getElementById('radarGrid').innerHTML = grid;
    </script>
</body>

</html>
```
FILE: styles.css
```css
* {
    box-sizing: border-box;
}

body {
    margin: 0;
    height: 100vh;
    display: flex;
    flex-direction: column;
    overflow: hidden;
    background-color: #0a1929;
    color: #fff;
    font-family: "IBM Plex Sans", "Noto Sans", sans-serif;
    font-size: 13px;
    line-height: 20px;
}

a {
    color: inherit;
    text-decoration: none;
}

button,
input {
    font: inherit;
    color: inherit;
    background: none;
    border: 0;
    padding: 0;
}

button {
    cursor: pointer;
}

svg {
    width: 20px;
    height: 20px;
    fill: currentColor;
    flex-shrink: 0;
}

h2,
h3,
p,
ul {
    margin: 0;
    padding: 0;
    font-weight: 400;
}

.sprite {
    display: none;
}

/* top bar */
.topbar {
    display: flex;
    align-items: center;
    flex: 0 0 60px;
    padding: 0 6px 4px 13px;
    background-color: #071a2e;
    box-shadow: 0 1px 4px rgba(0, 0, 0, 0.6);
    z-index: 1;
}

.logo {
    width: 216px;
    font-family: Lato, sans-serif;
    font-size: 24px;
    font-weight: 500;
    line-height: 30px;
}

.logo span {
    color: #f7941d;
}

.tabs {
    display: flex;
    gap: 16px;
    flex: 1;
    color: #00b1ff;
    font-weight: 500;
}

.tabs a {
    display: flex;
    align-items: center;
    gap: 8px;
    height: 23px;
    padding: 0 5px;
    border-radius: 4px;
}

.tabs .active {
    background-color: #00b1ff;
    color: #071a2e;
}

.search {
    display: flex;
    align-items: center;
    gap: 8px;
    width: 262px;
    height: 38px;
    margin-right: 5px;
    padding: 0 9px;
    border: 1px solid #33496a;
    border-radius: 5px;
    background-color: #001e3c;
}

.search input {
    flex: 1;
    min-width: 0;
    outline: none;
}

.tools {
    display: flex;
    align-items: center;
}

.tools button {
    display: flex;
    justify-content: center;
    width: 40px;
}

.tools svg {
    width: 24px;
    height: 24px;
}

.tools-right {
    height: 60px;
    margin: 0 0 -4px 5px;
    padding: 0 0 4px 5px;
    border-left: 1px solid #24364a;
}

/* left menu */
.layout {
    display: flex;
    flex: 1;
    min-height: 0;
}

.sidebar {
    flex: 0 0 53px;
    padding-top: 6px;
    border-right: 1px solid #26384a;
    background-color: #071a2e;
}

.menu {
    margin-bottom: 8px;
}

.menu + .menu {
    padding-top: 8px;
    border-top: 1px solid #26384a;
}

.menu a {
    display: flex;
    align-items: center;
    height: 35px;
    padding-left: 14px;
}

.menu .active {
    background-color: #06304f;
}

/* content */
.content {
    flex: 1;
    min-width: 0;
    padding: 0 17px 24px 24px;
    overflow: hidden;
}

.tab-line {
    height: 7px;
    padding-top: 4px;
    border-bottom: 1px solid #24364a;
}

.tab-line span {
    display: block;
    width: 103px;
    height: 2px;
    background-color: #00b1ff;
}

.grid {
    display: grid;
    grid-template-columns: 1fr 1fr;
    gap: 27px 24px;
    padding-top: 16px;
}

.grid section {
    min-width: 0;
}

h2 {
    margin-bottom: 7px;
    color: #a3a6a8;
    font-size: 12px;
    font-weight: 500;
    text-transform: uppercase;
}

.card {
    border: 1px solid #1c3652;
    border-radius: 6px;
    background-color: #001e3c;
    overflow: hidden;
}

.card-top {
    height: 587px;
}

/* map */
.map {
    display: block;
    width: 100%;
    height: 100%;
}

.land {
    fill: #0a1929;
}

.border {
    fill: none;
    stroke: #06305c;
    vector-effect: non-scaling-stroke;
}

.country {
    fill: #09283e;
    stroke: #00a2f0;
    vector-effect: non-scaling-stroke;
}

.islet {
    fill: #0673a8;
}

.names text {
    fill: #e8ebee;
    font-family: Roboto, sans-serif;
    font-size: 10px;
    font-weight: 600;
    text-anchor: middle;
}

.names-lg text {
    font-size: 13px;
}

/* basic information */
.info {
    display: grid;
    grid-template-columns: 1fr 1fr;
    gap: 24px;
    padding: 13px 15px;
}

.field {
    margin-bottom: 18px;
}

.field-marking {
    margin-bottom: 25px;
}

.field-labels {
    margin-bottom: 28px;
}

.field-creators {
    margin-bottom: 24px;
}

.field h3 {
    display: flex;
    align-items: center;
    gap: 10px;
    height: 20px;
    margin-bottom: 2px;
    color: #00b1ff;
    font-size: 13px;
}

.field em {
    margin-left: -6px;
}

.field p {
    font-size: 14px;
    line-height: 22px;
}

.field-stix h3 {
    gap: 8px;
    margin-bottom: 8px;
}

.field-stix h3 .icon-btn {
    margin-left: auto;
    margin-right: 5px;
}

.icon-btn {
    display: flex;
}

h3 .icon-btn {
    color: #ec407a;
}

.chip {
    display: block;
    width: 120px;
    height: 25px;
    font-size: 12px;
    line-height: 25px;
    text-align: center;
}

.chip-clear {
    border-radius: 4px;
    background-color: #fff;
    color: #2b2b2b;
}

.chip-grey {
    background-color: #1c3550;
}

.chip-status {
    width: 100px;
    border: 1px solid #7a7a7a;
    line-height: 23px;
}

.chip-no {
    background-color: #062c3e;
    color: #4caf50;
}

.btn {
    display: block;
    height: 31px;
    padding: 0 9px;
    border: 1px solid;
    border-radius: 4px;
    font-weight: 500;
    text-transform: uppercase;
    white-space: nowrap;
}

.btn-author {
    border-color: #86305f;
    color: #ec407a;
}

.btn-admin {
    border-color: #0270a8;
    color: #00b1ff;
}

.radar {
    display: block;
    width: 420px;
    height: 180px;
    font-size: 11px;
}

.radar g {
    fill: none;
    stroke: #17344f;
}

.code {
    display: flex;
    align-items: center;
    justify-content: space-between;
    height: 28px;
    padding: 0 5px 0 10px;
    background-color: #06223f;
}

.code code {
    font-family: "DejaVu Sans Mono", monospace;
    font-size: 10px;
}

.code svg {
    width: 18px;
    height: 18px;
}

/* lists */
.list {
    padding: 8px 0;
    list-style: none;
}

.row {
    display: grid;
    align-items: center;
    height: 50px;
    border-bottom: 1px solid #1c3652;
    white-space: nowrap;
}

.row-relation {
    grid-template-columns: 56px 103px 129px 1fr 103px 104px 164px 24px;
    padding: 0 24px 0 16px;
}

.row-container {
    grid-template-columns: 56px 109px 1fr 182px 109px 90px;
    padding: 0 83px 0 16px;
}

.row-icon {
    width: 24px;
    height: 24px;
}

.row-relation .row-icon {
    color: #9a9a9a;
}

.row-container .row-icon {
    color: #9c27b0;
}

.row .wand {
    justify-content: center;
    padding-bottom: 3px;
}

.row .more svg {
    width: 16px;
    height: 24px;
}

.row a {
    overflow: hidden;
}

.tag {
    display: flex;
    align-items: center;
    justify-content: center;
    height: 20px;
    border: 1px solid;
    font-size: 12px;
}

.tag svg {
    width: 12px;
    height: 12px;
    margin-right: 8px;
}

.tag-located {
    width: 93px;
    border-color: #0284c2;
    color: #00b1ff;
}

.tag-ip {
    width: 120px;
    border-color: #f52d55;
    background-color: #17213e;
    color: #f52d55;
}

.tag-city {
    width: 120px;
    border-color: #088074;
    background-color: #022840;
    color: #088074;
}

.tag-level {
    width: 80px;
    border: 0;
    background-color: #12353c;
    color: #8cf51e;
}

.tag-none {
    width: 90px;
    border: 2px solid #fff;
    border-radius: 4px;
}

.tag-report {
    width: 99px;
    border-color: #9c27b0;
    background-color: #101f48;
    color: #9c27b0;
}

.tag-clear {
    width: 90px;
    border: 0;
    border-radius: 4px;
    background-color: #fff;
    color: #2b2b2b;
}
```
